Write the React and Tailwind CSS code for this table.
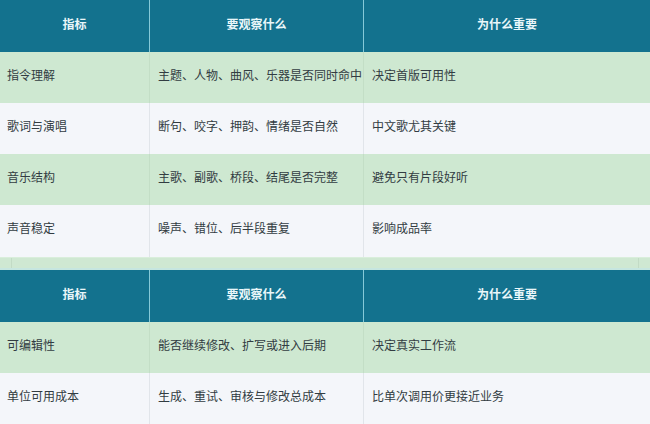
const cols = ['指标', '要观察什么', '为什么重要'];

const tableA = [
  ['指令理解', '主题、人物、曲风、乐器是否同时命中', '决定首版可用性'],
  ['歌词与演唱', '断句、咬字、押韵、情绪是否自然', '中文歌尤其关键'],
  ['音乐结构', '主歌、副歌、桥段、结尾是否完整', '避免只有片段好听'],
  ['声音稳定', '噪声、错位、后半段重复', '影响成品率'],
];

const tableB = [
  ['可编辑性', '能否继续修改、扩写或进入后期', '决定真实工作流'],
  ['单位可用成本', '生成、重试、审核与修改总成本', '比单次调用价更接近业务'],
];

const grid = 'grid grid-cols-[149px_214px_1fr]';

const Head = () => (
  <div className={`${grid} h-[52px] bg-[#13728e] text-[12px] font-bold text-[#eaf7fa]`}>
    {cols.map((c, i) => (
      <div
        key={c}
        className={`flex items-start justify-center pt-[15px] ${i > 0 ? 'border-l border-[#86c9d8]' : ''}`}
      >
        {c}
      </div>
    ))}
  </div>
);

const Row = ({ cells, green, tall }) => (
  <div
    className={`${grid} ${tall ? 'h-[52px]' : 'h-[51px]'} ${green ? 'bg-[#cee8d1]' : 'bg-[#f4f6fa]'} text-[12px] text-[#323c42]`}
  >
    {cells.map((c, i) => (
      <div
        key={i}
        className={`whitespace-nowrap pt-[14px] leading-[18px] ${i === 0 ? 'pl-[7px]' : 'pl-[8px]'} ${i > 0 ? (green ? 'border-l border-[#c3dec6]' : 'border-l border-[#e1e5ea]') : ''}`}
      >
        {c}
      </div>
    ))}
  </div>
);

export default function App() {
  return (
    <div
      className="w-[650px] h-[424px] overflow-hidden bg-white"
      style={{ fontFamily: '"Noto Sans CJK SC", "Noto Sans", sans-serif' }}
    >
      <Head />
      {tableA.map((r, i) => (
        <Row key={r[0]} cells={r} green={i % 2 === 0} tall={i === 3} />
      ))}
      <div className="flex h-[13px] flex-col bg-[#cfe8d2]">
        <div className="h-[1px] bg-[#d9eedb]" />
        <div className="flex flex-1 justify-between px-[11px]">
          <div className="w-[1px] bg-[#c2dbc5]" />
          <div className="w-[1px] bg-[#c2dbc5]" />
        </div>
        <div className="h-[2px] bg-[#c6e6e0]" />
      </div>
      <Head />
      {tableB.map((r, i) => (
        <Row key={r[0]} cells={r} green={i % 2 === 0} tall={i === 1} />
      ))}
    </div>
  );
}
